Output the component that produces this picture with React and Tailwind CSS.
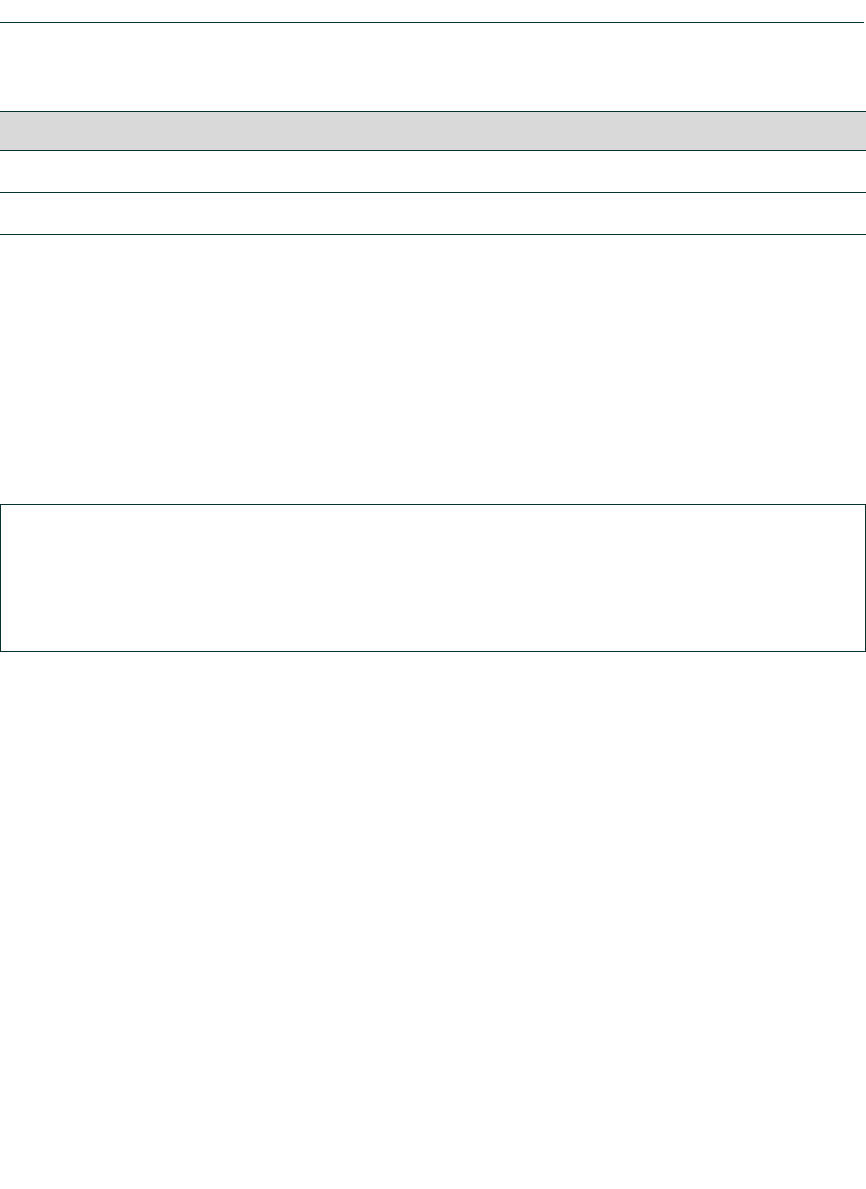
export default function App() {
  return (
    <div className="min-h-screen bg-white font-['Liberation_Sans',sans-serif]">
      {/* title rule */}
      <div className="pt-[22px]">
        <div className="h-px w-[864px] bg-[#06332e]" />
      </div>

      {/* table */}
      <div className="mt-[88px] border-t border-[#06332e]">
        <div className="h-[39px] bg-[#d9d9d9] border-b border-[#06332e]" />
        <div className="h-[42px] border-b border-[#06332e]" />
        <div className="h-[42px] border-b border-[#06332e]" />
      </div>

      {/* panel */}
      <div className="mt-[269px] h-[148px] w-[866px] border border-[#06332e]" />
    </div>
  )
}
